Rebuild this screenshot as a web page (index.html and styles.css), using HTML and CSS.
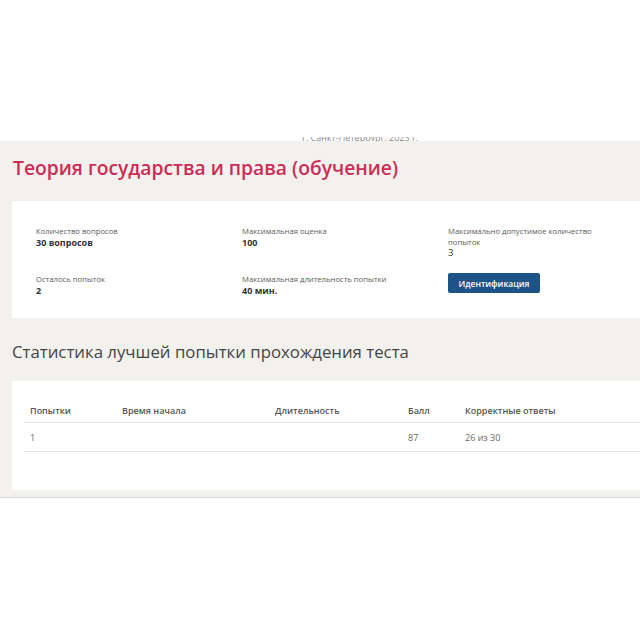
FILE: index.html
```html
<!DOCTYPE html>
<html lang="ru">
<head>
<meta charset="utf-8">
<title>Теория государства и права (обучение)</title>
<link rel="stylesheet" href="styles.css">
</head>
<body>
<div class="top">
  <div class="top-clip"><span class="top-text">г. Санкт-Петербург, 2023 г.</span></div>
</div>
<main class="band">
  <h1 class="title">Теория государства и права (обучение)</h1>
  <section class="card info">
    <div class="item">
      <div class="label">Количество вопросов</div>
      <div class="value">30 вопросов</div>
    </div>
    <div class="item">
      <div class="label">Максимальная оценка</div>
      <div class="value">100</div>
    </div>
    <div class="item">
      <div class="label">Максимально допустимое количество<br>попыток</div>
      <div class="value value-light">3</div>
    </div>
    <div class="item">
      <div class="label">Осталось попыток</div>
      <div class="value">2</div>
    </div>
    <div class="item">
      <div class="label">Максимальная длительность попытки</div>
      <div class="value">40 мин.</div>
    </div>
    <div class="item">
      <button class="btn">Идентификация</button>
    </div>
  </section>
  <h2 class="subtitle">Статистика лучшей попытки прохождения теста</h2>
  <section class="card stats">
    <table class="table">
      <thead>
        <tr>
          <th class="c1">Попытки</th>
          <th class="c2">Время начала</th>
          <th class="c3">Длительность</th>
          <th class="c4">Балл</th>
          <th class="c5">Корректные ответы</th>
        </tr>
      </thead>
      <tbody>
        <tr>
          <td>1</td>
          <td></td>
          <td></td>
          <td>87</td>
          <td>26 из 30</td>
        </tr>
      </tbody>
    </table>
  </section>
</main>
</body>
</html>
```
FILE: styles.css
```css
html, body {
  margin: 0;
  padding: 0;
  background: #ffffff;
  font-family: "Open Sans", "Noto Sans", "DejaVu Sans", sans-serif;
}
.top {
  height: 141px;
  display: flex;
  align-items: flex-end;
  justify-content: flex-start;
  padding-left: 302px;
  box-sizing: border-box;
}
.top-clip {
  height: 4px;
  overflow: hidden;
}
.top-text {
  display: block;
  font-size: 9px;
  line-height: 10px;
  color: #8a8a8a;
  margin-top: -4px;
}
.band {
  background: #f2f1ee;
  padding: 15px 0 7px 12px;
  border-bottom: 1px solid #d9d9d7;
}
.title {
  margin: 0 0 21px 0;
  font-size: 19.3px;
  line-height: 24px;
  font-weight: 600;
  color: #cc2c55;
  padding-left: 1px;
}
.card {
  background: #ffffff;
}
.info {
  display: grid;
  grid-template-columns: 206px 206px 1fr;
  row-gap: 15px;
  padding: 25px 0 22.5px 24px;
}
.label {
  font-size: 7.7px;
  line-height: 10.5px;
  color: #5a5a5a;
}
.value {
  font-size: 9px;
  line-height: 11px;
  font-weight: 700;
  color: #333;
}
.value-light {
  font-weight: 400;
  font-size: 9.5px;
  line-height: 12px;
}
.btn {
  display: block;
  margin-top: -1px;
  width: 92px;
  height: 20px;
  border: 0;
  border-radius: 2px;
  background: #1d5488;
  color: #ffffff;
  font-family: inherit;
  font-size: 8.5px;
  font-weight: 600;
  padding: 0;
}
.subtitle {
  margin: 0;
  padding: 22px 0 18px 0;
  font-size: 16.8px;
  line-height: 23px;
  font-weight: 400;
  color: #454545;
}
.stats {
  padding: 17px 0 38px 12px;
}
.table {
  width: 100%;
  border-collapse: collapse;
  table-layout: fixed;
}
.table th, .table td {
  text-align: left;
  padding: 0 6px;
  font-size: 9px;
  color: #555;
}
.table th {
  height: 24px;
  font-weight: 600;
  border-bottom: 1px solid #e6e6e6;
}
.table td {
  height: 28px;
  font-weight: 400;
  color: #666;
  border-bottom: 1px solid #e6e6e6;
}
.c1 { width: 80px; }
.c2 { width: 141px; }
.c3 { width: 121px; }
.c4 { width: 45px; }
```
